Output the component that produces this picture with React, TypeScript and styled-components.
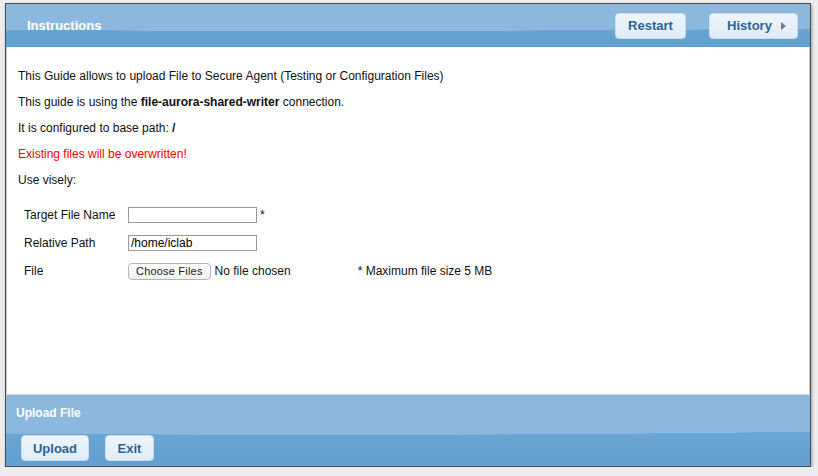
import React from "react";
import styled, { createGlobalStyle } from "styled-components";

const Global = createGlobalStyle`
  html, body { margin: 0; padding: 0; background: #ececec; }
  body { font-family: "Liberation Sans", Arial, sans-serif; }
`;

const Window = styled.div`
  margin: 3px 0 0 5px;
  width: 806px;
  height: 464px;
  box-sizing: border-box;
  border: 1px solid #4d4d4d;
  box-shadow: 1px 2px 3px rgba(0, 0, 0, 0.35);
  display: flex;
  flex-direction: column;
  background: #fff;
`;

const Band = styled.div<{ $h: number; $wave: number }>`
  position: relative;
  height: ${(p) => p.$h}px;
  flex: 0 0 auto;
  box-sizing: border-box;
  background:
    radial-gradient(ellipse 1400px ${(p) => p.$wave + 12}px at 40% -12px, #8bb8dc 99.5%, transparent 100%),
    linear-gradient(#74aad6, #62a0d0);
`;

const Header = styled(Band)`
  display: flex;
  align-items: center;
  padding: 1px 12px 0 21px;
  border-bottom: 1px solid #5c9acd;
`;

const Title = styled.div`
  color: #fff;
  font: bold 13px "Liberation Sans", Arial, sans-serif;
  flex: 1;
  padding-top: 0;
`;

const ToolButton = styled.button<{ $w: number }>`
  width: ${(p) => p.$w}px;
  height: 26px;
  margin-left: ${(p) => (p.$w > 80 ? 23 : 0)}px;
  border: 1px solid #c9ddef;
  border-radius: 4px;
  background: linear-gradient(#eef5fc, #dfecf9);
  color: #2d6496;
  font: bold 13px "Liberation Sans", Arial, sans-serif;
  padding: 0;
  display: flex;
  align-items: center;
  justify-content: center;
  gap: 9px;
  cursor: pointer;
`;

const Arrow = styled.span`
  width: 0;
  height: 0;
  border-top: 4px solid transparent;
  border-bottom: 4px solid transparent;
  border-left: 5px solid #7a7a7a;
  margin-right: -6px;
`;

const Content = styled.div`
  flex: 1;
  padding: 16px 10px 0 11px;
  border-left: 1px solid #c8c8c8;
  border-right: 1px solid #c8c8c8;
  color: #111;
  font-size: 12px;
`;

const Para = styled.p<{ $red?: boolean }>`
  margin: 0;
  line-height: 26px;
  color: ${(p) => (p.$red ? "#ff0000" : "#111")};
`;

const Form = styled.div`
  display: grid;
  grid-template-columns: 104px auto;
  grid-auto-rows: 28px;
  align-items: center;
  margin: 8px 0 0 6px;
`;

const Label = styled.div`
  font-size: 12px;
`;

const Field = styled.div`
  display: flex;
  align-items: center;
  font-size: 12px;
`;

const Input = styled.input`
  width: 129px;
  height: 16px;
  box-sizing: border-box;
  border: 1px solid #9a9a9a;
  padding: 0 2px;
  font: 12px "Liberation Sans", Arial, sans-serif;
  color: #000;
  margin: 0 3px 0 0;
`;

const FileButton = styled.button`
  height: 17px;
  border: 1px solid #b5b5b5;
  border-radius: 4px;
  background: linear-gradient(#ffffff, #f0f0f0);
  font: 11px "Liberation Sans", Arial, sans-serif;
  letter-spacing: 0.2px;
  color: #222;
  padding: 0 7px;
  margin-right: 4px;
`;

const Note = styled.span`
  margin-left: 67px;
`;

const Footer = styled(Band)`
  display: flex;
  flex-direction: column;
  padding: 11px 0 0 10px;
  border-top: 1px solid #c8d8e6;
`;

const FooterTitle = styled.div`
  color: #fff;
  font: bold 12px "Liberation Sans", Arial, sans-serif;
  height: 18px;
  line-height: 14px;
`;

const FooterButtons = styled.div`
  display: flex;
  gap: 16px;
  margin: 11px 0 0 5px;
`;

export default function App() {
  return (
    <>
      <Global />
      <Window>
        <Header $h={43} $wave={27}>
          <Title>Instructions</Title>
          <ToolButton $w={71}>Restart</ToolButton>
          <ToolButton $w={89}>
            History <Arrow />
          </ToolButton>
        </Header>
        <Content>
          <Para>This Guide allows to upload File to Secure Agent (Testing or Configuration Files)</Para>
          <Para>
            This guide is using the <b>file-aurora-shared-writer</b> connection.
          </Para>
          <Para>
            It is configured to base path: <b>/</b>
          </Para>
          <Para $red>Existing files will be overwritten!</Para>
          <Para>Use visely:</Para>
          <Form>
            <Label>Target File Name</Label>
            <Field>
              <Input defaultValue="" />*
            </Field>
            <Label>Relative Path</Label>
            <Field>
              <Input defaultValue="/home/iclab" />
            </Field>
            <Label>File</Label>
            <Field>
              <FileButton>Choose Files</FileButton>
              No file chosen
              <Note>* Maximum file size 5 MB</Note>
            </Field>
          </Form>
        </Content>
        <Footer $h={72} $wave={40}>
          <FooterTitle>Upload File</FooterTitle>
          <FooterButtons>
            <ToolButton $w={68}>Upload</ToolButton>
            <ToolButton $w={49}>Exit</ToolButton>
          </FooterButtons>
        </Footer>
      </Window>
    </>
  );
}
